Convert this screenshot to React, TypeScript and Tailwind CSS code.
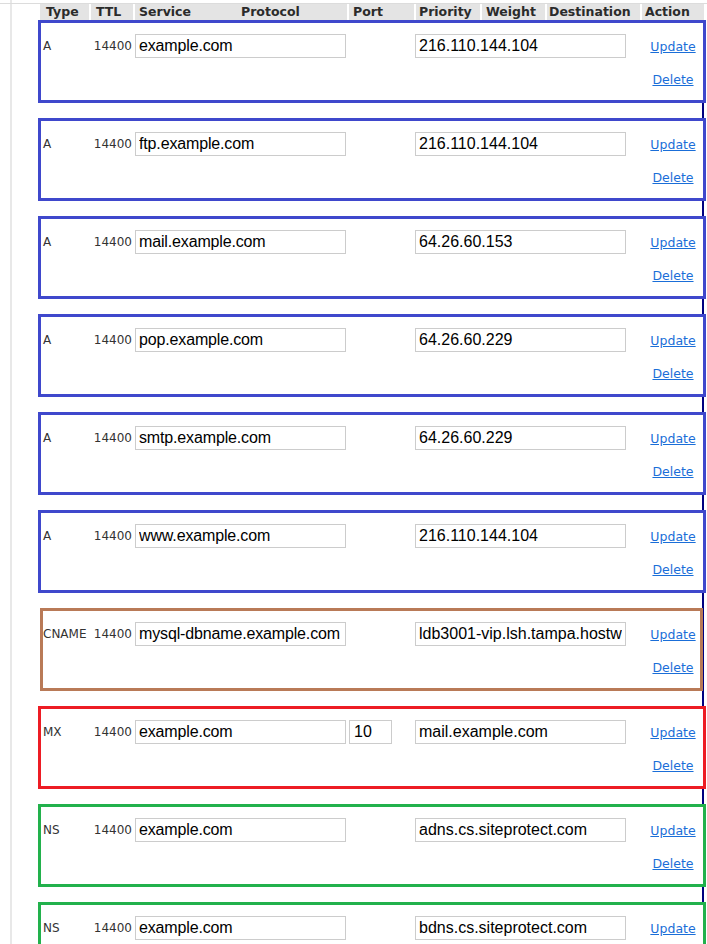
import React from 'react';

type Rec = {
  type: string;
  service: string;
  port?: string;
  dest: string;
  tone: 'blue' | 'brown' | 'red' | 'green';
};

const records: Rec[] = [
  { type: 'A', service: 'example.com', dest: '216.110.144.104', tone: 'blue' },
  { type: 'A', service: 'ftp.example.com', dest: '216.110.144.104', tone: 'blue' },
  { type: 'A', service: 'mail.example.com', dest: '64.26.60.153', tone: 'blue' },
  { type: 'A', service: 'pop.example.com', dest: '64.26.60.229', tone: 'blue' },
  { type: 'A', service: 'smtp.example.com', dest: '64.26.60.229', tone: 'blue' },
  { type: 'A', service: 'www.example.com', dest: '216.110.144.104', tone: 'blue' },
  { type: 'CNAME', service: 'mysql-dbname.example.com', dest: 'ldb3001-vip.lsh.tampa.hostway.net', tone: 'brown' },
  { type: 'MX', service: 'example.com', port: '10', dest: 'mail.example.com', tone: 'red' },
  { type: 'NS', service: 'example.com', dest: 'adns.cs.siteprotect.com', tone: 'green' },
  { type: 'NS', service: 'example.com', dest: 'bdns.cs.siteprotect.com', tone: 'green' },
];

// box outline per record type
const boxTone = {
  blue: 'border-[#3f48cc] w-[668px]',
  brown: 'border-[#b97a57] w-[663px] ml-[2px]',
  red: 'border-[#ed1c24] w-[668px]',
  green: 'border-[#22b14c] w-[668px]',
};

const rowShift = {
  blue: '',
  brown: '-ml-[2px]',
  red: '',
  green: '',
};

const headers = [
  { label: 'Type', cls: 'w-[49px] pl-[6px]' },
  { label: 'TTL', cls: 'w-[44px] border-l-2 border-white pl-[5px]' },
  { label: 'Service', cls: 'w-[102px] border-l-2 border-white pl-[4px]' },
  { label: 'Protocol', cls: 'w-[112px] pl-[6px]' },
  { label: 'Port', cls: 'w-[67px] border-l-2 border-white pl-[4px]' },
  { label: 'Priority', cls: 'w-[66px] border-l-2 border-white pl-[3px]' },
  { label: 'Weight', cls: 'w-[65px] border-l-2 border-white pl-[4px]' },
  { label: 'Destination', cls: 'w-[95px] border-l-2 border-white pl-[2px]' },
  { label: 'Action', cls: 'w-[64px] border-l-2 border-white pl-[3px]' },
];

function RecordBox({ rec }: { rec: Rec }) {
  return (
    <div className={`h-[83px] shrink-0 border-[3px] bg-white pt-[11px] ${boxTone[rec.tone]}`}>
      <div className={`flex items-start ${rowShift[rec.tone]}`}>
        <div className="w-[48px] shrink-0 pl-[2px] text-[12px] leading-[25px] text-[#333]">{rec.type}</div>
        <div className="w-[44px] shrink-0 pr-[1px] text-right text-[12px] leading-[25px] text-[#333]">14400</div>
        <input
          readOnly
          value={rec.service}
          className="ml-[2px] h-[24px] w-[211px] shrink-0 border border-[#cccccc] bg-white px-[3px] font-['Liberation_Sans',Arial,sans-serif] text-[16px] tracking-[-0.15px] text-black outline-none"
        />
        <div className="w-[69px] shrink-0 pl-[3px]">
          {rec.port && (
            <input
              readOnly
              value={rec.port}
              className="h-[24px] w-[43px] border border-[#cccccc] bg-white px-[4px] font-['Liberation_Sans',Arial,sans-serif] text-[16px] text-black outline-none"
            />
          )}
        </div>
        <input
          readOnly
          value={rec.dest}
          className="h-[24px] w-[211px] shrink-0 border border-[#cccccc] bg-white px-[3px] font-['Liberation_Sans',Arial,sans-serif] text-[16px] text-black outline-none"
        />
        <div className="ml-[17px] flex w-[60px] shrink-0 flex-col items-center text-[12.5px] text-[#1a6ed8]">
          <a href="#" className="leading-[25px] underline">Update</a>
          <a href="#" className="mt-[13px] leading-[16px] underline">Delete</a>
        </div>
      </div>
    </div>
  );
}

export default function App() {
  return (
    <div className="min-h-screen bg-white font-['DejaVu_Sans',Verdana,sans-serif]">
      <div className="flex h-[3px]">
        <div className="w-[10px]" />
        <div className="w-[2px] bg-[#e8e8e8]" />
      </div>
      <div className="h-px bg-[#dcdcdc]" />
      <div className="flex">
        <div className="w-[10px] shrink-0" />
        <div className="w-[2px] shrink-0 bg-[#e8e8e8]" />
        <div className="ml-[26px] w-[668px] shrink-0">
          {/* Column header */}
          <div className="ml-[2px] flex h-[16px] w-[664px] bg-[#e4e4e4] text-[12.5px] font-bold leading-[16px] text-[#2b2b2b]">
            {headers.map((h) => (
              <div key={h.label} className={h.cls}>
                {h.label}
              </div>
            ))}
          </div>

          {/* Records */}
          <div className="flex w-[666px] flex-col gap-[15px] border-r-2 border-[#000080] pb-[20px]">
            {records.map((r, i) => (
              <RecordBox key={i} rec={r} />
            ))}
          </div>
        </div>
      </div>
    </div>
  );
}
